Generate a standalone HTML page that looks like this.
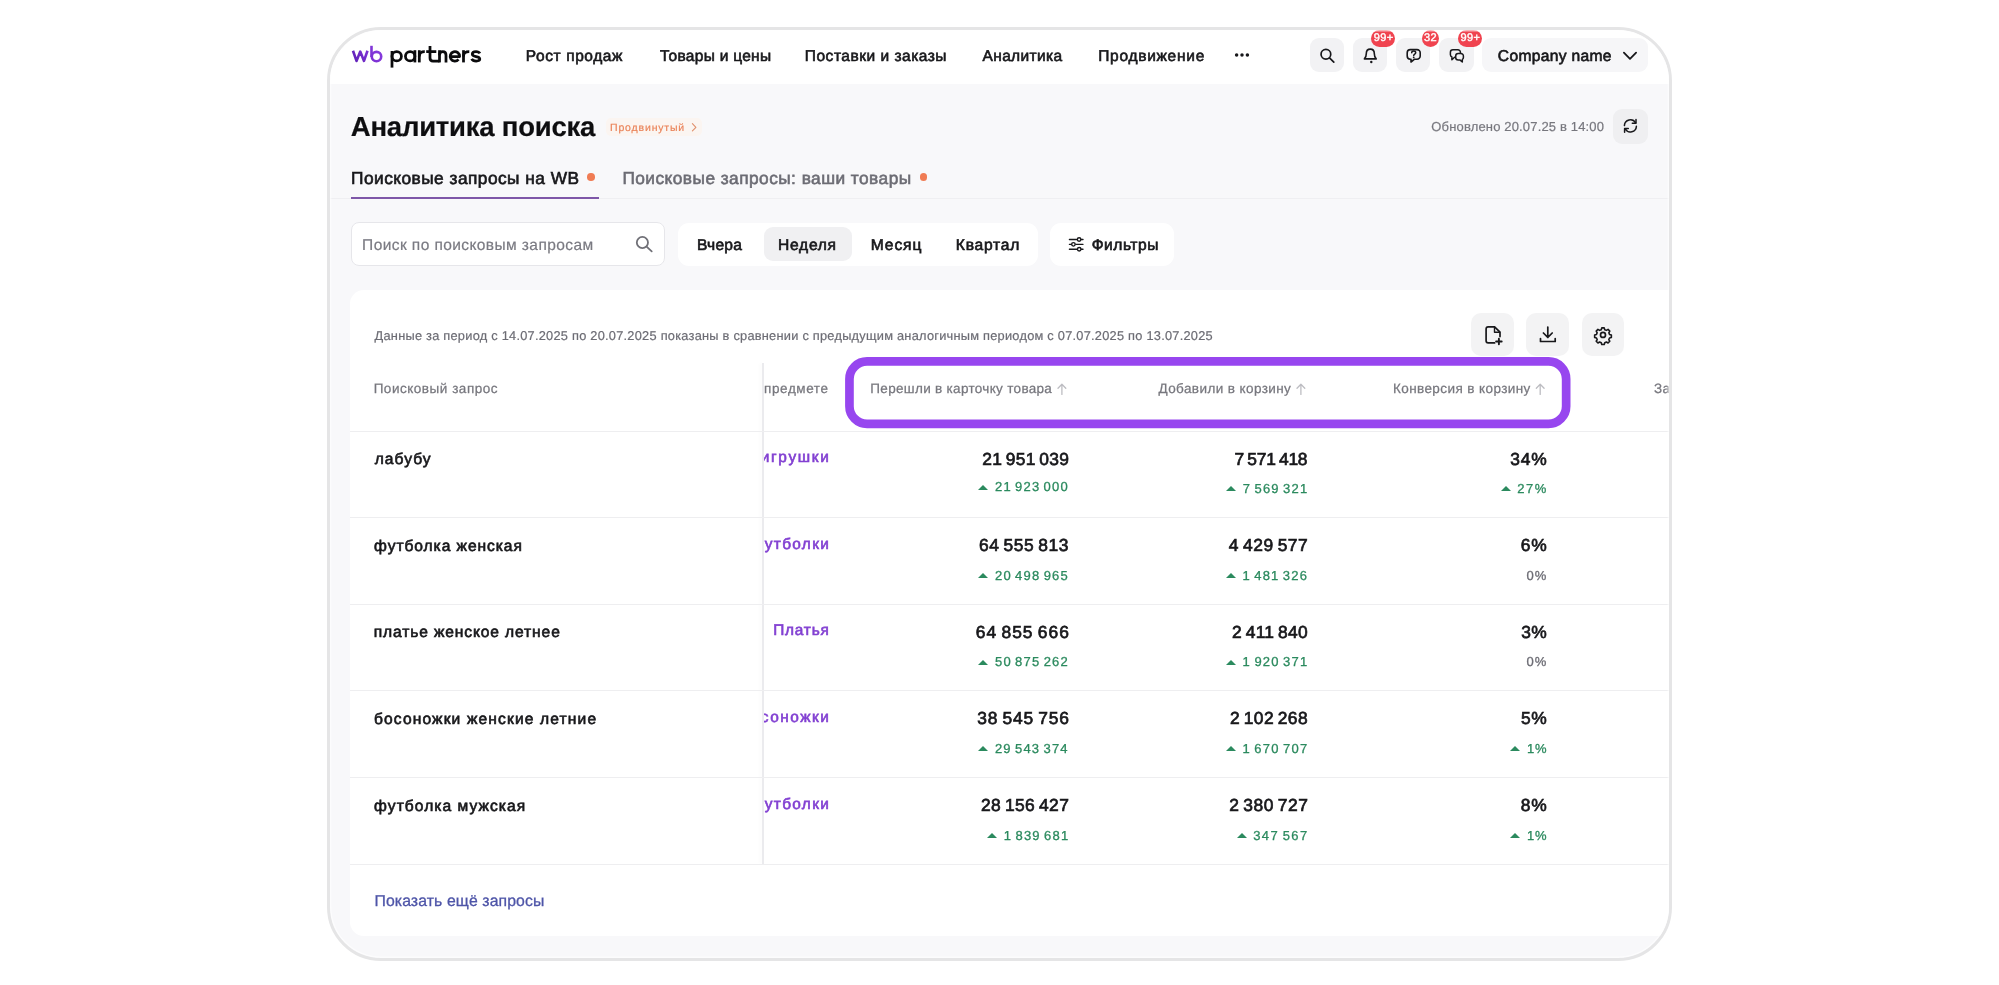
<!DOCTYPE html>
<html lang="ru"><head><meta charset="utf-8"><title>Аналитика поиска</title>
<style>
*{box-sizing:border-box;margin:0;padding:0}
html,body{width:1999px;height:985px;background:#fff;overflow:hidden}
body{font-family:"Liberation Sans",sans-serif;position:relative;text-rendering:geometricPrecision}
.frame{position:absolute;left:327px;top:26.7px;width:1345px;height:934.3px;border:3px solid #e5e5e6;border-radius:54px;overflow:hidden;background:#f8f8fa}
.frame::after{content:"";position:absolute;left:0;top:0;right:0;bottom:0;border-radius:51px;box-shadow:inset 0 0 0 1.4px rgba(255,255,255,.6);pointer-events:none}
.page{will-change:transform;position:absolute;left:-330px;top:-29.7px;width:1999px;height:985px}
.t{position:absolute;white-space:nowrap;display:block}
.hdr{position:absolute;left:320px;top:20px;width:1360px;height:64.3px;background:#fff}
.ib{position:absolute;top:37.6px;width:34.4px;height:34.6px;border-radius:9px;background:#f2f2f4}
.ib svg,.ab svg,.rb svg{position:absolute;left:0;top:0;overflow:visible}
.badge{position:absolute;top:30px;height:17.4px;border-radius:9px;background:#f0434f;color:#fff;font-size:11px;line-height:17.4px;text-align:center;letter-spacing:0.35px;-webkit-text-stroke:0.4px #fff;font-size:11px;padding-left:0.5px}
.comp{position:absolute;left:1482px;top:37.6px;width:165.5px;height:34.6px;border-radius:9px;background:#f6f6f8}
.lvl{position:absolute;left:606px;top:118.2px;width:95.5px;height:18.2px;border-radius:5px;background:#fbf5f1}
.rb{position:absolute;left:1612.7px;top:109px;width:35.3px;height:34.8px;border-radius:9px;background:#efeff1}
.tabline{position:absolute;left:320px;top:197.5px;width:1360px;height:1px;background:#efeff2}
.tabsel{position:absolute;left:351px;top:197px;width:247.7px;height:2.1px;background:#7e57a8}
.dot{position:absolute;width:7.6px;height:7.6px;border-radius:50%;background:#f07c54}
.search{position:absolute;left:351px;top:222.4px;width:313.6px;height:43.2px;border:1px solid #e6e6ea;border-radius:8px;background:#fff}
.seg{position:absolute;left:678.3px;top:223px;width:360px;height:42.6px;border-radius:11px;background:#fff}
.segsel{position:absolute;left:764px;top:226.8px;width:87.8px;height:34.6px;border-radius:9px;background:#f0f0f2}
.filt{position:absolute;left:1050.3px;top:223px;width:123.4px;height:42.6px;border-radius:11px;background:#fff}
.card{position:absolute;left:350.2px;top:289.5px;width:1340px;height:646.3px;border-radius:14px;background:#fff}
.ab{position:absolute;top:313px;width:42.8px;height:42.6px;border-radius:10px;background:#f3f3f4}
.vline{position:absolute;left:762.3px;top:362.5px;width:1.5px;height:501px;background:#ebebee;box-shadow:-2px 0 4px rgba(0,0,0,0.03)}
.row{position:absolute;left:350.2px;width:1340px;height:1.2px;background:#eeeef0}
.tri{position:absolute;width:0;height:0;border-left:5.1px solid transparent;border-right:5.1px solid transparent;border-bottom:5.5px solid #2b8a5e}
.stick{position:absolute;left:350.2px;top:360px;width:412px;height:503.5px;background:#fff}
.ov{position:absolute;left:0;top:0}
h1{font-size:inherit;font-weight:normal}

</style></head>
<body>
<div class="frame"><div class="page">
<header class="hdr"></header>
<nav>
<span class="t " style="left:525.84px;top:49.06px;font-size:15.5px;line-height:15.5px;color:#18181b;letter-spacing:0.583px;-webkit-text-stroke:0.62px #18181b;">Рост продаж</span><span class="t " style="left:660.07px;top:49.06px;font-size:15.5px;line-height:15.5px;color:#18181b;letter-spacing:0.282px;-webkit-text-stroke:0.62px #18181b;">Товары и цены</span><span class="t " style="left:804.85px;top:49.06px;font-size:15.5px;line-height:15.5px;color:#18181b;letter-spacing:0.508px;-webkit-text-stroke:0.62px #18181b;">Поставки и заказы</span><span class="t " style="left:982.52px;top:49.06px;font-size:15.5px;line-height:15.5px;color:#18181b;letter-spacing:0.357px;-webkit-text-stroke:0.62px #18181b;">Аналитика</span><span class="t " style="left:1098.18px;top:49.06px;font-size:15.5px;line-height:15.5px;color:#18181b;letter-spacing:0.727px;-webkit-text-stroke:0.62px #18181b;">Продвижение</span>
</nav>
<div class="ib" style="left:1309.5px"></div>
<div class="ib" style="left:1352.6px"></div>
<div class="ib" style="left:1395.9px"></div>
<div class="ib" style="left:1439.3px"></div>
<div class="comp"></div>
<span class="t " style="left:1497.87px;top:49.07px;font-size:15.6px;line-height:15.6px;color:#18181b;letter-spacing:0.315px;-webkit-text-stroke:0.65px #18181b;">Company name</span>
<div class="badge" style="left:1371.2px;width:24.3px">99+</div>
<div class="badge" style="left:1421.7px;width:17.2px">32</div>
<div class="badge" style="left:1458.2px;width:23.9px">99+</div>

<h1><span class="t " style="left:350.83px;top:113.06px;font-size:27.5px;line-height:27.5px;color:#0e0e10;letter-spacing:-0.221px;font-weight:bold;-webkit-text-stroke:0.20px #0e0e10;">Аналитика поиска</span></h1>
<div class="lvl"></div><span class="t " style="left:610.07px;top:123.06px;font-size:10.5px;line-height:10.5px;color:#ea8257;letter-spacing:0.834px;-webkit-text-stroke:0.15px #ea8257;">Продвинутый</span>
<span class="t " style="left:1431.35px;top:120.07px;font-size:13px;line-height:13px;color:#77777e;letter-spacing:0.157px;-webkit-text-stroke:0.20px #77777e;">Обновлено 20.07.25 в 14:00</span>
<div class="rb"></div>

<div class="tabline"></div><div class="tabsel"></div>
<span class="t " style="left:351.02px;top:170.06px;font-size:17.3px;line-height:17.3px;color:#18181b;letter-spacing:0.476px;-webkit-text-stroke:0.65px #18181b;">Поисковые запросы на WB</span><i class="dot" style="left:587.4px;top:173.45px"></i>
<span class="t " style="left:622.43px;top:170.06px;font-size:17.3px;line-height:17.3px;color:#6c6c74;letter-spacing:0.460px;-webkit-text-stroke:0.60px #6c6c74;">Поисковые запросы: ваши товары</span><i class="dot" style="left:919.9px;top:173.45px"></i>

<div class="search"></div><span class="t " style="left:362.11px;top:238.06px;font-size:15.5px;line-height:15.5px;color:#7a7a82;letter-spacing:0.412px;-webkit-text-stroke:0.20px #7a7a82;">Поиск по поисковым запросам</span>
<div class="seg"></div><div class="segsel"></div>
<span class="t " style="left:696.92px;top:238.08px;font-size:15.6px;line-height:15.6px;color:#18181b;letter-spacing:0.252px;-webkit-text-stroke:0.65px #18181b;">Вчера</span><span class="t " style="left:778.07px;top:238.08px;font-size:15.6px;line-height:15.6px;color:#18181b;letter-spacing:0.721px;-webkit-text-stroke:0.65px #18181b;">Неделя</span><span class="t " style="left:870.77px;top:238.08px;font-size:15.6px;line-height:15.6px;color:#18181b;letter-spacing:0.895px;-webkit-text-stroke:0.65px #18181b;">Месяц</span><span class="t " style="left:955.77px;top:238.08px;font-size:15.6px;line-height:15.6px;color:#18181b;letter-spacing:0.777px;-webkit-text-stroke:0.65px #18181b;">Квартал</span>
<div class="filt"></div><span class="t " style="left:1091.78px;top:238.08px;font-size:15.6px;line-height:15.6px;color:#18181b;letter-spacing:0.498px;-webkit-text-stroke:0.65px #18181b;">Фильтры</span>

<section class="card"></section>
<span class="t " style="left:374.55px;top:330.08px;font-size:12.8px;line-height:12.8px;color:#6c6c74;letter-spacing:0.246px;-webkit-text-stroke:0.20px #6c6c74;">Данные за период с 14.07.2025 по 20.07.2025 показаны в сравнении с предыдущим аналогичным периодом с 07.07.2025 по 13.07.2025</span>
<div class="ab" style="left:1471.3px"></div>
<div class="ab" style="left:1526.2px"></div>
<div class="ab" style="left:1581.6px"></div>
<span class="t" style="top:450.08px;font-size:15.4px;line-height:15.4px;color:#8240d2;-webkit-text-stroke:0.62px #8240d2;left:auto;right:1168.53px;letter-spacing:1.671px;">игрушки</span>
<span class="t" style="top:537.07px;font-size:15.4px;line-height:15.4px;color:#8240d2;-webkit-text-stroke:0.62px #8240d2;left:auto;right:1168.89px;letter-spacing:1.314px;">Футболки</span>
<span class="t" style="top:623.07px;font-size:15.4px;line-height:15.4px;color:#8240d2;-webkit-text-stroke:0.62px #8240d2;left:auto;right:1169.43px;letter-spacing:0.770px;">Платья</span>
<span class="t" style="top:710.06px;font-size:15.4px;line-height:15.4px;color:#8240d2;-webkit-text-stroke:0.62px #8240d2;left:auto;right:1168.70px;letter-spacing:1.501px;">Босоножки</span>
<span class="t" style="top:797.07px;font-size:15.4px;line-height:15.4px;color:#8240d2;-webkit-text-stroke:0.62px #8240d2;left:auto;right:1168.89px;letter-spacing:1.314px;">Футболки</span>

<div class="stick"></div>
<div class="vline"></div>
<span class="t " style="left:373.64px;top:382.08px;font-size:13.5px;line-height:13.5px;color:#77777e;letter-spacing:0.528px;-webkit-text-stroke:0.25px #77777e;">Поисковый запрос</span><span class="t " style="left:764.08px;top:382.08px;font-size:13.5px;line-height:13.5px;color:#77777e;letter-spacing:0.590px;-webkit-text-stroke:0.25px #77777e;">предмете</span><span class="t " style="left:870.31px;top:382.08px;font-size:13.5px;line-height:13.5px;color:#77777e;letter-spacing:0.316px;-webkit-text-stroke:0.25px #77777e;">Перешли в карточку товара</span><span class="t " style="left:1158.46px;top:382.08px;font-size:13.5px;line-height:13.5px;color:#77777e;letter-spacing:0.413px;-webkit-text-stroke:0.25px #77777e;">Добавили в корзину</span><span class="t " style="left:1392.95px;top:382.08px;font-size:13.5px;line-height:13.5px;color:#77777e;letter-spacing:0.412px;-webkit-text-stroke:0.25px #77777e;">Конверсия в корзину</span><span class="t " style="left:1653.92px;top:382.08px;font-size:13.5px;line-height:13.5px;color:#77777e;letter-spacing:0.444px;-webkit-text-stroke:0.25px #77777e;">Зак</span>
<div class="row" style="top:430.5px"></div>
<span class="t " style="left:374.76px;top:452.08px;font-size:15.6px;line-height:15.6px;color:#18181b;letter-spacing:1.019px;-webkit-text-stroke:0.65px #18181b;">лабубу</span>
<span class="t " style="left:982.19px;top:451.07px;font-size:17.4px;line-height:17.4px;color:#18181b;letter-spacing:0.267px;word-spacing:-1.4px;-webkit-text-stroke:0.70px #18181b;">21 951 039</span>
<span class="t " style="left:994.97px;top:480.06px;font-size:13px;line-height:13px;color:#2b8a5e;letter-spacing:1.182px;word-spacing:-1.5px;-webkit-text-stroke:0.30px #2b8a5e;">21 923 000</span>
<span class="t " style="left:1234.55px;top:451.07px;font-size:17.4px;line-height:17.4px;color:#18181b;letter-spacing:-0.199px;word-spacing:-1.4px;-webkit-text-stroke:0.70px #18181b;">7 571 418</span>
<span class="t " style="left:1242.77px;top:482.06px;font-size:13px;line-height:13px;color:#2b8a5e;letter-spacing:1.201px;word-spacing:-1.5px;-webkit-text-stroke:0.30px #2b8a5e;">7 569 321</span>
<span class="t " style="left:1510.31px;top:451.07px;font-size:17.4px;line-height:17.4px;color:#18181b;letter-spacing:0.834px;-webkit-text-stroke:0.70px #18181b;">34%</span>
<span class="t " style="left:1517.37px;top:482.06px;font-size:13px;line-height:13px;color:#2b8a5e;letter-spacing:1.439px;-webkit-text-stroke:0.30px #2b8a5e;">27%</span>
<div class="row" style="top:517.1px"></div>
<span class="t " style="left:374.12px;top:539.07px;font-size:15.6px;line-height:15.6px;color:#18181b;letter-spacing:0.926px;-webkit-text-stroke:0.65px #18181b;">футболка женская</span>
<span class="t " style="left:979.06px;top:537.07px;font-size:17.4px;line-height:17.4px;color:#18181b;letter-spacing:0.584px;word-spacing:-1.4px;-webkit-text-stroke:0.70px #18181b;">64 555 813</span>
<span class="t " style="left:994.97px;top:569.06px;font-size:13px;line-height:13px;color:#2b8a5e;letter-spacing:1.190px;word-spacing:-1.5px;-webkit-text-stroke:0.30px #2b8a5e;">20 498 965</span>
<span class="t " style="left:1228.82px;top:537.07px;font-size:17.4px;line-height:17.4px;color:#18181b;letter-spacing:0.548px;word-spacing:-1.4px;-webkit-text-stroke:0.70px #18181b;">4 429 577</span>
<span class="t " style="left:1242.62px;top:569.06px;font-size:13px;line-height:13px;color:#2b8a5e;letter-spacing:1.177px;word-spacing:-1.5px;-webkit-text-stroke:0.30px #2b8a5e;">1 481 326</span>
<span class="t " style="left:1520.87px;top:537.07px;font-size:17.4px;line-height:17.4px;color:#18181b;letter-spacing:0.783px;-webkit-text-stroke:0.70px #18181b;">6%</span>
<span class="t " style="left:1526.60px;top:569.06px;font-size:13px;line-height:13px;color:#6c6c74;letter-spacing:0.849px;-webkit-text-stroke:0.30px #6c6c74;">0%</span>
<div class="row" style="top:603.7px"></div>
<span class="t " style="left:373.73px;top:625.08px;font-size:15.6px;line-height:15.6px;color:#18181b;letter-spacing:0.871px;-webkit-text-stroke:0.65px #18181b;">платье женское летнее</span>
<span class="t " style="left:975.87px;top:624.06px;font-size:17.4px;line-height:17.4px;color:#18181b;letter-spacing:0.968px;word-spacing:-1.4px;-webkit-text-stroke:0.70px #18181b;">64 855 666</span>
<span class="t " style="left:994.98px;top:655.06px;font-size:13px;line-height:13px;color:#2b8a5e;letter-spacing:1.188px;word-spacing:-1.5px;-webkit-text-stroke:0.30px #2b8a5e;">50 875 262</span>
<span class="t " style="left:1231.93px;top:624.06px;font-size:17.4px;line-height:17.4px;color:#18181b;letter-spacing:0.316px;word-spacing:-1.4px;-webkit-text-stroke:0.70px #18181b;">2 411 840</span>
<span class="t " style="left:1242.62px;top:655.06px;font-size:13px;line-height:13px;color:#2b8a5e;letter-spacing:1.219px;word-spacing:-1.5px;-webkit-text-stroke:0.30px #2b8a5e;">1 920 371</span>
<span class="t " style="left:1521.17px;top:624.06px;font-size:17.4px;line-height:17.4px;color:#18181b;letter-spacing:0.485px;-webkit-text-stroke:0.70px #18181b;">3%</span>
<span class="t " style="left:1526.60px;top:655.06px;font-size:13px;line-height:13px;color:#6c6c74;letter-spacing:0.849px;-webkit-text-stroke:0.30px #6c6c74;">0%</span>
<div class="row" style="top:690.3px"></div>
<span class="t " style="left:373.92px;top:712.07px;font-size:15.6px;line-height:15.6px;color:#18181b;letter-spacing:1.133px;-webkit-text-stroke:0.65px #18181b;">босоножки женские летние</span>
<span class="t " style="left:977.31px;top:710.07px;font-size:17.4px;line-height:17.4px;color:#18181b;letter-spacing:0.807px;word-spacing:-1.4px;-webkit-text-stroke:0.70px #18181b;">38 545 756</span>
<span class="t " style="left:994.97px;top:742.07px;font-size:13px;line-height:13px;color:#2b8a5e;letter-spacing:1.170px;word-spacing:-1.5px;-webkit-text-stroke:0.30px #2b8a5e;">29 543 374</span>
<span class="t " style="left:1229.93px;top:710.07px;font-size:17.4px;line-height:17.4px;color:#18181b;letter-spacing:0.384px;word-spacing:-1.4px;-webkit-text-stroke:0.70px #18181b;">2 102 268</span>
<span class="t " style="left:1242.62px;top:742.07px;font-size:13px;line-height:13px;color:#2b8a5e;letter-spacing:1.211px;word-spacing:-1.5px;-webkit-text-stroke:0.30px #2b8a5e;">1 670 707</span>
<span class="t " style="left:1521.04px;top:710.07px;font-size:17.4px;line-height:17.4px;color:#18181b;letter-spacing:0.616px;-webkit-text-stroke:0.70px #18181b;">5%</span>
<span class="t " style="left:1527.11px;top:742.07px;font-size:13px;line-height:13px;color:#2b8a5e;letter-spacing:0.743px;-webkit-text-stroke:0.30px #2b8a5e;">1%</span>
<div class="row" style="top:776.9px"></div>
<span class="t " style="left:374.12px;top:799.07px;font-size:15.6px;line-height:15.6px;color:#18181b;letter-spacing:1.034px;-webkit-text-stroke:0.65px #18181b;">футболка мужская</span>
<span class="t " style="left:980.93px;top:797.07px;font-size:17.4px;line-height:17.4px;color:#18181b;letter-spacing:0.411px;word-spacing:-1.4px;-webkit-text-stroke:0.70px #18181b;">28 156 427</span>
<span class="t " style="left:1003.71px;top:829.06px;font-size:13px;line-height:13px;color:#2b8a5e;letter-spacing:1.208px;word-spacing:-1.5px;-webkit-text-stroke:0.30px #2b8a5e;">1 839 681</span>
<span class="t " style="left:1229.19px;top:797.07px;font-size:17.4px;line-height:17.4px;color:#18181b;letter-spacing:0.507px;word-spacing:-1.4px;-webkit-text-stroke:0.70px #18181b;">2 380 727</span>
<span class="t " style="left:1253.21px;top:829.06px;font-size:13px;line-height:13px;color:#2b8a5e;letter-spacing:1.407px;word-spacing:-1.5px;-webkit-text-stroke:0.30px #2b8a5e;">347 567</span>
<span class="t " style="left:1520.74px;top:797.07px;font-size:17.4px;line-height:17.4px;color:#18181b;letter-spacing:0.915px;-webkit-text-stroke:0.70px #18181b;">8%</span>
<span class="t " style="left:1527.11px;top:829.06px;font-size:13px;line-height:13px;color:#2b8a5e;letter-spacing:0.743px;-webkit-text-stroke:0.30px #2b8a5e;">1%</span>
<i class="tri" style="left:978.2px;top:484.6px"></i>
<i class="tri" style="left:1226.0px;top:486.4px"></i>
<i class="tri" style="left:1500.6px;top:486.4px"></i>
<i class="tri" style="left:978.2px;top:573.0px"></i>
<i class="tri" style="left:1226.0px;top:573.0px"></i>
<i class="tri" style="left:978.2px;top:659.6px"></i>
<i class="tri" style="left:1226.0px;top:659.6px"></i>
<i class="tri" style="left:978.2px;top:746.2px"></i>
<i class="tri" style="left:1226.0px;top:746.2px"></i>
<i class="tri" style="left:1509.6px;top:746.2px"></i>
<i class="tri" style="left:987.1px;top:832.8px"></i>
<i class="tri" style="left:1236.6px;top:832.8px"></i>
<i class="tri" style="left:1509.6px;top:832.8px"></i>

<div class="row" style="top:863.5px"></div>
<svg class="ov" width="1999" height="985" viewBox="0 0 1999 985" fill="none"><rect x="849.45" y="361.4" width="716.7" height="62.4" rx="17.6" ry="17.6" stroke="#9746ef" stroke-width="8.7"/></svg>
<span class="t " style="left:374.45px;top:894.07px;font-size:15.8px;line-height:15.8px;color:#4e55a8;letter-spacing:0.107px;-webkit-text-stroke:0.30px #4e55a8;">Показать ещё запросы</span>

<svg class="ov" width="1999" height="985" viewBox="0 0 1999 985" fill="none" stroke-linecap="round" stroke-linejoin="round">
<defs><linearGradient id="wbg" x1="352" y1="62" x2="383" y2="46" gradientUnits="userSpaceOnUse"><stop offset="0" stop-color="#5c20b4"/><stop offset=".5" stop-color="#7b30d2"/><stop offset="1" stop-color="#8a3ee0"/></linearGradient></defs>
<!-- logo -->
<g stroke="url(#wbg)" stroke-width="2.6" stroke-linecap="butt" stroke-linejoin="round">
<path d="M353 50.8 L356.5 60.9 L360.25 51.6 L364 60.9 L367.5 50.8"/>
<path d="M371.5 45.8 V57"/><circle cx="376.5" cy="56.6" r="4.72"/>
</g>
<g stroke="#0b0b0d" stroke-width="2.75" stroke-linecap="butt" stroke-linejoin="round">
<path d="M392 51 V67.6"/><circle cx="396.7" cy="56.25" r="4.72"/>
<circle cx="410.15" cy="56.25" r="4.72"/><path d="M414.9 50.2 V62.4"/>
<path d="M419.3 50.2 V62.4"/><path d="M419.3 56.4 C419.3 53.2 421.4 51.5 424.8 51.6"/>
<path d="M430 45.9 V58 Q430 61.05 433 61.05 H439.5"/><path d="M426.2 51.6 H436.3"/>
<path d="M439.5 50.2 V62.4"/><path d="M439.5 55.2 C439.5 52.8 440.9 51.5 442.8 51.5 C444.8 51.5 446 52.9 446 55.2 V62.4"/>
<path d="M450.2 56.5 H459.6 A4.72 4.72 0 1 0 458.5 59.4"/>
<path d="M463.5 50.2 V62.4"/><path d="M463.5 56.4 C463.5 53.2 465.6 51.5 469.3 51.6"/>
<path d="M479.9 53.4 C479.2 52.1 477.8 51.5 476 51.5 C473.8 51.5 472.3 52.5 472.3 54.1 C472.3 55.7 473.6 56.2 476 56.6 C478.6 57 479.8 57.8 479.8 59.1 C479.8 60.4 478.3 61.05 476.2 61.05 C474 61.05 472.4 60.3 471.6 58.9"/>
</g>
<!-- nav dots -->
<g fill="#18181b"><circle cx="1236.6" cy="55" r="1.75"/><circle cx="1242" cy="55" r="1.75"/><circle cx="1247.4" cy="55" r="1.75"/></g>
<!-- header icons -->
<g stroke="#18181b" stroke-width="1.7">
<circle cx="1325.9" cy="54.3" r="4.85"/><path d="M1329.5 57.9 L1333.8 62.2"/>
<path stroke-width="1.6" d="M1364.4 58.9 C1366 57.5 1366.3 55.5 1366.3 53.6 C1366.3 50.8 1368 49.1 1370.3 49.1 C1372.6 49.1 1374.3 50.8 1374.3 53.6 C1374.3 55.5 1374.6 57.5 1376.2 58.9 Z"/>
<circle cx="1371.3" cy="62" r="1.2" fill="#18181b" stroke="none"/>
<path stroke-width="1.6" d="M1410.4 49.6 H1417 A3.2 3.2 0 0 1 1420.2 52.8 V56 A3.2 3.2 0 0 1 1417 59.2 H1414.6 L1411 62 V59.2 H1410.4 A3.2 3.2 0 0 1 1407.2 56 V52.8 A3.2 3.2 0 0 1 1410.4 49.6 Z"/>
<path stroke-width="1.5" d="M1452.9 49.7 H1457.9 A2.5 2.5 0 0 1 1460.4 52.2 V54.8 A2.5 2.5 0 0 1 1457.9 57.3 H1454.6 L1451.9 59.8 V57 A2.5 2.5 0 0 1 1450.4 54.8 V52.2 A2.5 2.5 0 0 1 1452.9 49.7 Z"/>
<path stroke-width="1.5" fill="#f2f2f4" d="M1458.2 53.6 H1460.9 A2.5 2.5 0 0 1 1463.4 56.1 V57.4 A2.5 2.5 0 0 1 1462.3 59.5 V62 L1459.8 59.9 H1458.2 A2.5 2.5 0 0 1 1455.7 57.4 V56.1 A2.5 2.5 0 0 1 1458.2 53.6 Z"/>
<path stroke-width="1.8" d="M1623.9 52.6 L1630 58.9 L1636.1 52.6"/>
</g>
<path d="M1411.7 52.8 C1411.7 51.7 1412.5 51.1 1413.7 51.1 C1414.9 51.1 1415.7 51.7 1415.7 52.8 C1415.7 54.2 1413.7 54.1 1413.7 55.6" stroke="#18181b" stroke-width="1.5"/><circle cx="1413.7" cy="57.4" r="0.9" fill="#18181b"/>
<!-- level chevron -->
<path d="M692.4 123.7 L695.9 127.3 L692.4 130.9" stroke="#e0906c" stroke-width="1.1"/>
<!-- refresh -->
<g stroke="#18181b" stroke-width="1.5">
<path d="M1624.4 125.6 A6 6 0 0 1 1635.6 122.9"/><path d="M1636 119.6 V123.3 H1632.3"/>
<path d="M1636.4 126.2 A6 6 0 0 1 1625.2 128.9"/><path d="M1624.6 132.3 V128.6 H1628.3"/>
</g>
<!-- search input icon -->
<g stroke="#707077" stroke-width="1.8"><circle cx="642.4" cy="242.5" r="5.6"/><path d="M646.6 246.7 L651.7 251.4"/></g>
<!-- filter icon -->
<g stroke="#18181b" stroke-width="1.35">
<path d="M1069.4 239.45 H1083"/><path d="M1069.4 244.3 H1083"/><path d="M1069.4 249.2 H1083"/>
<circle cx="1079.1" cy="239.45" r="1.75" fill="#fff"/><circle cx="1073.4" cy="244.3" r="1.75" fill="#fff"/><circle cx="1079.2" cy="249.2" r="1.75" fill="#fff"/>
</g>
<!-- card action icons -->
<g stroke="#18181b" stroke-width="1.7">
<path d="M1494.6 342.9 H1488.2 A2.1 2.1 0 0 1 1486.1 340.8 V328.9 A2.1 2.1 0 0 1 1488.2 326.8 H1494.6 L1500 332.2 V336.6"/><path d="M1494.5 327.2 V332.3 H1499.6" stroke-width="1.4"/>
<path d="M1498.9 338.7 V344.3 M1496.1 341.5 H1501.7" stroke-width="1.9"/>
<path d="M1547.8 327 V337.4 M1543.4 333 L1547.8 337.4 L1552.2 333"/><path d="M1540.5 338.6 V341.5 H1555.2 V338.6"/>
<circle cx="1603" cy="334.9" r="2.5"/>
<path transform="translate(1603 334.9) scale(0.87) translate(-1603 -334.9)" id="gear" d="M1601.6 326.8 h2.8 l0.6 2.1 l1.9 0.8 l1.9-1.1 l2 2 l-1.1 1.9 l0.8 1.9 l2.1 0.6 v2.8 l-2.1 0.6 l-0.8 1.9 l1.1 1.9 l-2 2 l-1.9-1.1 l-1.9 0.8 l-0.6 2.1 h-2.8 l-0.6-2.1 l-1.9-0.8 l-1.9 1.1 l-2-2 l1.1-1.9 l-0.8-1.9 l-2.1-0.6 v-2.8 l2.1-0.6 l0.8-1.9 l-1.1-1.9 l2-2 l1.9 1.1 l1.9-0.8 z" stroke-width="1.85"/>
</g>
<!-- sort arrows -->
<g stroke="#bdbdc2" stroke-width="1.3">
<path d="M1061.9 394.4 V384.9 M1058.0 388.2 L1061.9 384.3 L1065.8 388.2"/>
<path d="M1300.9 394.4 V384.9 M1297.0 388.2 L1300.9 384.3 L1304.8 388.2"/>
<path d="M1540.2 394.4 V384.9 M1536.3 388.2 L1540.2 384.3 L1544.1 388.2"/>
</g>
</svg>
</div></div>

</body></html>
